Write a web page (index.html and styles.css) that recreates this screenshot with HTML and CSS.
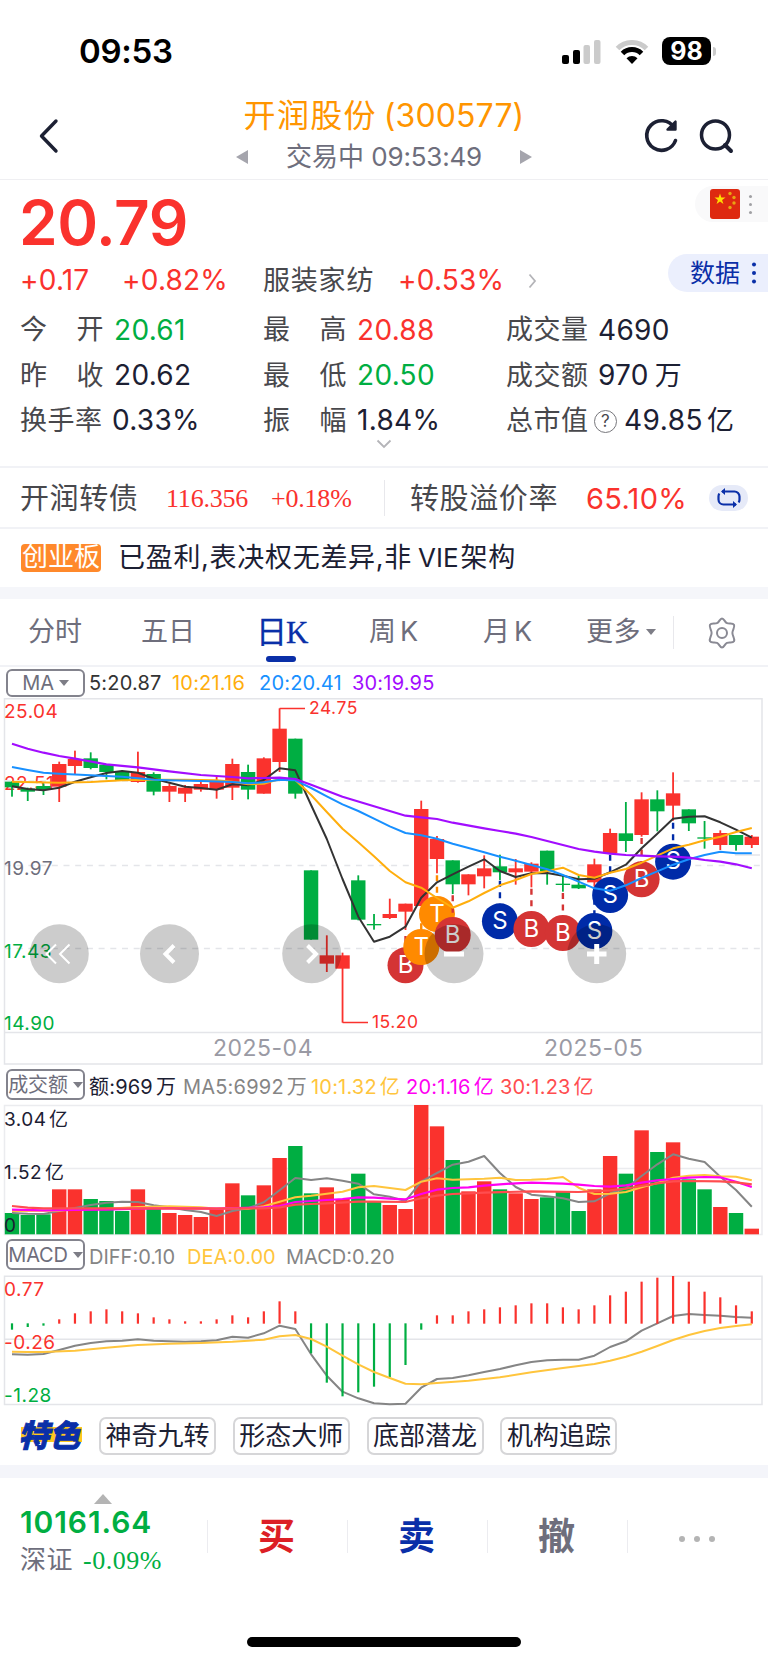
FILE: index.html
```html
<!DOCTYPE html>
<html lang="zh-CN">
<head>
    <meta charset="UTF-8">
    <meta name="viewport" content="width=device-width, initial-scale=1.0">
    <title>开润股份(300577)</title>
    <link rel="stylesheet" href="styles.css">
</head>
<body>
    <div class="statusbar">
        <span class="time">09:53</span>
        <svg class="signal" width="40" height="26" viewBox="0 0 40 26">
            <rect x="0" y="15" width="7" height="9" rx="2"/>
            <rect x="11" y="10" width="7" height="14" rx="2"/>
            <rect x="21.500" y="5" width="6.500" height="19" rx="2" fill="#cbcbcb"/>
            <rect x="32" y="0" width="6.500" height="24" rx="2" fill="#cbcbcb"/>
        </svg>
        <svg class="wifi" width="34" height="26" viewBox="0 0 34 26">
            <path d="M2.500 8.500a20.500 20.500 0 0 1 29 0" fill="none" stroke="#cbcbcb" stroke-width="5"/>
            <path d="M7.500 13.500a13.500 13.500 0 0 1 19 0" fill="none" stroke="#000" stroke-width="5"/>
            <path d="M17 24l-5.500-5.700a8 8 0 0 1 11 0z"/>
        </svg>
        <span class="battery">98</span>
        <i class="battery-cap"></i>
    </div>

    <div class="header">
        <svg class="back" width="22" height="36" viewBox="0 0 22 36"><path d="M18 3L3.500 18L18 33" fill="none" stroke="#1c2033" stroke-width="3.400" stroke-linecap="round" stroke-linejoin="round"/></svg>
        <div class="title">
            <div class="name">开润股份<span>(300577)</span></div>
            <div class="state">
                <svg width="12" height="14" viewBox="0 0 12 14"><path d="M12 0v14L0 7z"/></svg>
                <span>交易中 <b>09:53:49</b></span>
                <svg width="12" height="14" viewBox="0 0 12 14"><path d="M0 0v14l12-7z"/></svg>
            </div>
        </div>
        <svg class="refresh" width="36" height="36" viewBox="0 0 36 36">
            <path d="M31 9.500A14.800 14.800 0 1 0 32.500 22.500" fill="none" stroke="#1c2033" stroke-width="3.600" stroke-linecap="round"/>
            <path d="M32.500 3.500v8h-8z" fill="#1c2033" stroke="#1c2033" stroke-width="2.400" stroke-linejoin="round"/>
        </svg>
        <svg class="search" width="36" height="36" viewBox="0 0 36 36">
            <circle cx="16.500" cy="17" r="14" fill="none" stroke="#1c2033" stroke-width="3.500"/>
            <path d="M26 27l6 6" stroke="#1c2033" stroke-width="4" stroke-linecap="round"/>
        </svg>
    </div>

    <div class="quote">
        <div class="price-row">
            <span class="price">20.79</span>
            <div class="flag">
                <svg width="30" height="30" viewBox="0 0 30 30">
                    <rect width="30" height="30" rx="3" fill="#de2910"/>
                    <path d="M10 4.500l1.300 4h4.200l-3.400 2.500 1.300 4-3.400-2.500-3.400 2.500 1.300-4-3.400-2.500h4.200z" fill="#ffde00"/>
                    <g fill="#e8a413"><circle cx="20" cy="4.500" r="1.700"/><circle cx="24" cy="8.500" r="1.700"/><circle cx="24" cy="14" r="1.700"/><circle cx="20" cy="18.500" r="1.700"/></g>
                </svg>
                <i class="dots gray"></i>
            </div>
        </div>
        <div class="change-row">
            <span class="up">+0.17</span>
            <span class="up">+0.82%</span>
            <span class="label">服装家纺</span>
            <span class="up">+0.53%</span>
            <svg width="9" height="16" viewBox="0 0 9 16"><path d="M1.500 1.500L7 8l-5.500 6.500" fill="none" stroke="#b4b4b8" stroke-width="1.800"/></svg>
            <div class="data-btn">数据<i class="dots"></i></div>
        </div>
        <div class="grid">
            <div><span class="label just"><i>今</i><i>开</i></span><span class="down">20.61</span></div>
            <div><span class="label just"><i>最</i><i>高</i></span><span class="up">20.88</span></div>
            <div><span class="label">成交量</span><span>4690</span></div>
            <div><span class="label just"><i>昨</i><i>收</i></span><span>20.62</span></div>
            <div><span class="label just"><i>最</i><i>低</i></span><span class="down">20.50</span></div>
            <div><span class="label">成交额</span><span>970<em>万</em></span></div>
            <div><span class="label">换手率</span><span class="pull">0.33%</span></div>
            <div><span class="label just"><i>振</i><i>幅</i></span><span>1.84%</span></div>
            <div><span class="label">总市值</span><span class="help">?</span><span class="cap">49.85<em>亿</em></span></div>
        </div>
        <svg class="expand" width="16" height="10" viewBox="0 0 16 10"><path d="M1.500 1.500L8 8l6.500-6.500" fill="none" stroke="#b4b4b8" stroke-width="1.800"/></svg>
    </div>

    <div class="bond">
        <span class="bond-name">开润转债</span>
        <span class="serif">116.356</span>
        <span class="serif">+0.18%</span>
        <div class="premium">
            <span class="bond-name">转股溢价率</span>
            <span class="rate">65.10%</span>
            <span class="swap">
                <svg width="26" height="20" viewBox="0 0 26 20" fill="none" stroke="#0a2fa8" stroke-width="2.200">
                    <path d="M6 3.500h12.500a5 5 0 0 1 5 5v3a6 6 0 0 1-.8 3"/>
                    <path d="M20 16.500H7.500a5 5 0 0 1-5-5v-3a6 6 0 0 1 .8-3"/>
                    <path d="M9 0L5 3.500 9 7zM17 13l4 3.500-4 3.500z" fill="#0a2fa8" stroke="none"/>
                </svg>
            </span>
        </div>
    </div>

    <div class="notice">
        <span class="tag">创业板</span>
        <span class="notice-text">已盈利,表决权无差异,非<b>VIE</b>架构</span>
    </div>

    <div class="tabs">
        <span>分时</span>
        <span>五日</span>
        <span class="active">日K</span>
        <span>周<b>K</b></span>
        <span>月<b>K</b></span>
        <span class="more">更多<i class="caret"></i></span>
        <svg width="32" height="32" viewBox="0 0 32 32" fill="none" stroke="#8a8a94" stroke-width="2">
            <path d="M16 1.500c2.200 0 2.600 3.600 5 4.700 2.200 1 5.800-.6 7 1.600 1.300 2.300-1.600 5.100-1.600 8.200s2.900 5.900 1.600 8.200c-1.200 2.200-4.800.6-7 1.600-2.400 1.100-2.800 4.700-5 4.700s-2.600-3.600-5-4.700c-2.200-1-5.800.6-7-1.600C2.700 21.900 5.600 19.100 5.600 16S2.700 10.100 4 7.800c1.200-2.200 4.800-.6 7-1.600 2.400-1.100 2.800-4.700 5-4.700z"/>
            <circle cx="16" cy="16" r="5"/>
        </svg>
    </div>

    <div class="legend ma">
        <span class="select">MA<i class="caret"></i></span>
        <span class="c-dark">5:20.87</span>
        <span class="c-orange">10:21.16</span>
        <span class="c-blue">20:20.41</span>
        <span class="c-purple">30:19.95</span>
    </div>
    <svg id="kline" class="chart" width="768" height="369"></svg>

    <div class="legend vol">
        <span class="select">成交额<i class="caret"></i></span>
        <span class="c-ink">额:969<em>万</em></span>
        <span class="c-gray">MA5:6992<em>万</em></span>
        <span class="c-yellow">10:1.32<em>亿</em></span>
        <span class="c-magenta">20:1.16<em>亿</em></span>
        <span class="c-red">30:1.23<em>亿</em></span>
    </div>
    <svg id="volume" class="chart" width="768" height="132"></svg>

    <div class="legend macd">
        <span class="select">MACD<i class="caret"></i></span>
        <span class="c-gray">DIFF:0.10</span>
        <span class="c-yellow">DEA:0.00</span>
        <span class="c-gray">MACD:0.20</span>
    </div>
    <svg id="macd" class="chart" width="768" height="131"></svg>

    <div class="features">
        <span class="logo">特色</span>
        <span class="chip">神奇九转</span>
        <span class="chip">形态大师</span>
        <span class="chip">底部潜龙</span>
        <span class="chip">机构追踪</span>
    </div>

    <div class="footer">
        <div class="index">
            <i class="tri"></i>
            <div class="index-num">10161.64</div>
            <div class="index-name">深证<span>-0.09%</span></div>
        </div>
        <div class="act buy">买</div>
        <div class="act sell">卖</div>
        <div class="act cancel">撤</div>
        <div class="act"><i class="dot"></i><i class="dot"></i><i class="dot"></i></div>
    </div>
    <div class="home"></div>

    <script src="chart.js"></script>
</body>
</html>
```

FILE: styles.css
```css
*{
    margin: 0;
    padding: 0;
    box-sizing: border-box;
}

body{
    width: 768px;
    height: 1663px;
    overflow: hidden;
    background-color: #fff;
    color: #1c2033;
    font-family: Inter, "Noto Sans CJK SC", sans-serif;
    font-size: 28px;
    line-height: 1.2;
}

i, em{
    font-style: normal;
}

span{
    white-space: nowrap;
}

svg{
    display: block;
    flex: none;
}

.up{ color: #fa322d; }
.down{ color: #00ae42; }
.label{ color: #48484c; }

/* 状态栏 */
.statusbar{
    display: flex;
    align-items: center;
    height: 102px;
    padding-left: 79px;
    color: #000;
}

.time{
    width: 483px;
    margin-top: 2px;
    font-size: 33px;
    font-weight: 600;
    letter-spacing: -0.3px;
}

.signal{
    margin-top: 3px;
}

.wifi{
    margin-left: 13px;
    margin-top: 3px;
}

.battery{
    width: 49px;
    height: 28px;
    margin-left: 13px;
    border-radius: 8px;
    background-color: #000;
    color: #fff;
    font-size: 25px;
    font-weight: 700;
    line-height: 28px;
    text-align: center;
}

.battery-cap{
    width: 3px;
    height: 9px;
    margin-left: 2px;
    border-radius: 0 4px 4px 0;
    background-color: #cbcbcb;
}

/* 标题 */
.header{
    display: flex;
    height: 78px;
    padding-left: 38px;
    border-bottom: 1px solid #efeff2;
}

.back{
    margin-top: 16px;
}

.title{
    width: 440px;
    margin-left: 103px;
    text-align: center;
}

.name{
    height: 28px;
    margin-left: 2px;
    color: #ff9500;
    font-size: 32px;
    letter-spacing: 1.3px;
    line-height: 28px;
}

.name span{
    margin-left: 7px;
    letter-spacing: 0.1px;
}

.state{
    display: flex;
    align-items: center;
    justify-content: center;
    height: 28px;
    margin-top: 13px;
    margin-left: 2px;
    color: #6e6e7c;
    font-size: 26px;
    gap: 38px;
}

.state b{
    font-weight: 400;
    letter-spacing: -0.2px;
}

.state svg{
    fill: #a5a5ad;
}

.refresh{
    margin: 16px 0 0 40px;
}

.search{
    margin: 16px 0 0 20px;
}

/* 行情 */
.quote{
    height: 288px;
    border-bottom: 2px solid #f1f2f6;
}

.price-row{
    display: flex;
    justify-content: space-between;
    height: 75px;
    padding-left: 19px;
}

.price{
    margin-top: 5px;
    color: #fa322d;
    font-size: 62px;
    font-weight: 600;
    letter-spacing: -0.4px;
    line-height: 76px;
}

.flag{
    display: flex;
    align-items: center;
    width: 73px;
    height: 36px;
    margin-top: 6px;
    padding-left: 15px;
    border-radius: 18px 0 0 18px;
    background-color: #f9f9fa;
}

.dots{
    width: 4px;
    height: 4px;
    margin-left: 12px;
    border-radius: 50%;
    background-color: #0a2fa8;
    box-shadow: 0 -8.5px #0a2fa8, 0 8.5px #0a2fa8;
}

.dots.gray{
    width: 3px;
    height: 3px;
    margin-left: 9px;
    background-color: #a0a0a4;
    box-shadow: 0 -8px #a0a0a4, 0 8px #a0a0a4;
}

.change-row{
    display: grid;
    grid-template-columns: 102px 141px 135px 130px 140px 1fr;
    align-items: center;
    height: 52px;
    padding-left: 20px;
}

.change-row .up{
    letter-spacing: 0.2px;
}

.change-row .label{
    font-size: 27px;
    letter-spacing: 0.8px;
}

.data-btn{
    display: flex;
    align-items: center;
    height: 38px;
    margin-top: -16px;
    padding-left: 22px;
    border-radius: 19px 0 0 19px;
    background-color: #ebeffd;
    color: #0a2fa8;
    font-size: 25px;
}

.grid{
    display: grid;
    grid-template-columns: 243px 242px 1fr;
    grid-auto-rows: 45.3px;
    margin-top: 1px;
    padding-left: 20px;
}

.grid > div{
    display: flex;
    align-items: center;
    letter-spacing: 0.3px;
}

.grid .label{
    width: 84px;
    margin-right: 10px;
    font-size: 27px;
    letter-spacing: 0.5px;
}

.grid > div:nth-child(3n) .label{
    margin-right: 8px;
    margin-left: 1px;
}

.grid .pull{
    margin-left: -2px;
}

.grid em{
    margin-left: 6px;
    font-size: 27px;
}

.just{
    display: flex;
    justify-content: space-between;
}

.grid .help{
    width: 23px;
    height: 23px;
    margin-left: -4px;
    border: 1.5px solid #77777c;
    border-radius: 50%;
    color: #48484c;
    font-size: 17px;
    line-height: 20px;
    text-align: center;
}

.cap{
    margin-left: 7px;
    letter-spacing: 0.5px;
}

.grid .cap em{
    margin-left: 4px;
}

.expand{
    margin: -5px auto 0;
}

/* 转债 */
.bond{
    display: flex;
    align-items: center;
    height: 61px;
    padding-top: 1px;
    padding-left: 20px;
    border-bottom: 2px solid #f1f2f6;
    color: #fa322d;
}

.bond-name{
    width: 146px;
    margin-top: 2px;
    color: #48484c;
    font-size: 29px;
    letter-spacing: 0.6px;
}

.serif{
    width: 105px;
    margin-top: 2px;
    font-family: "Liberation Serif", serif;
    font-size: 26px;
    letter-spacing: -0.2px;
}

.premium{
    display: flex;
    align-items: center;
    height: 36px;
    margin-left: 8px;
    padding-left: 25px;
    border-left: 1px solid #e8e8ec;
}

.premium .bond-name{
    width: 176px;
}

.rate{
    width: 123px;
    margin-top: 2px;
    font-size: 29px;
    letter-spacing: 0.3px;
}

.swap{
    display: flex;
    align-items: center;
    justify-content: center;
    width: 39px;
    height: 26px;
    border-radius: 13px;
    background-color: #e6eaf8;
}

.notice{
    display: flex;
    align-items: center;
    height: 70px;
    padding-left: 21px;
    border-bottom: 12px solid #f5f6fa;
}

.tag{
    width: 80px;
    height: 28px;
    margin-right: 17px;
    border-radius: 4px;
    background-color: #ff892b;
    color: #fff;
    font-size: 26px;
    line-height: 26px;
    text-align: center;
}

.notice-text{
    font-size: 27px;
    letter-spacing: 0.7px;
}

.notice-text b{
    margin: 0 2px 0 6px;
    font-size: 26px;
    font-weight: 400;
    letter-spacing: 0;
}

/* 周期切换 */
.tabs{
    display: grid;
    grid-template-columns: 113px 115px 113px 114px 103px 88px 1fr;
    align-items: center;
    height: 68px;
    padding-top: 1px;
    padding-left: 28px;
    border-bottom: 2px solid #f1f2f6;
    color: #6e6e7c;
    font-size: 27px;
}

.tabs b{
    margin-left: 4px;
    font-weight: 400;
}

.tabs .active{
    position: relative;
    color: #0a2fa8;
    font-family: "Liberation Serif", "Noto Sans CJK SC", serif;
    font-size: 31px;
    -webkit-text-stroke: 0.3px #0a2fa8;
    letter-spacing: -1px;
}

.active::after{
    content: '';
    position: absolute;
    left: 10px;
    top: 42px;
    width: 30px;
    height: 6px;
    border-radius: 3px;
    background-color: #0a2fa8;
}

.more{
    display: flex;
    align-items: center;
    letter-spacing: 0.5px;
    border-right: 1px solid #e8e8ec;
}

.tabs svg{
    margin-left: 32px;
}

.caret{
    display: inline-block;
    margin-left: 5px;
    border: 5px solid transparent;
    border-top: 6px solid #7d7d86;
    border-bottom: 0;
}

/* 指标说明行 */
.legend{
    display: grid;
    align-items: center;
    padding-left: 6px;
    font-size: 20px;
    letter-spacing: 0.2px;
}

.select{
    display: flex;
    align-items: center;
    justify-content: center;
    width: 79px;
    height: 31px;
    border: 2px solid #83838d;
    border-radius: 6px;
    color: #6e6e7c;
    font-size: 20px;
    letter-spacing: -0.2px;
}

.ma{
    grid-template-columns: 83px 83px 87px 93px 1fr;
    height: 31px;
}

.ma .select{
    height: 28px;
}

.vol{
    grid-template-columns: 83px 94px 128px 95px 94px 1fr;
    height: 37px;
    padding-top: 3px;
}

.vol .select,
.macd .select{
    margin-top: -5px;
}

.macd{
    grid-template-columns: 83px 98px 99px 1fr;
    height: 39px;
    padding-top: 3px;
    letter-spacing: 0;
}

.legend em{
    margin-left: 3px;
}

.c-dark{ color: #333; }
.c-ink{ color: #1c2033; }
.c-gray{ color: #858585; }
.c-orange{ color: #ffae0d; }
.c-yellow{ color: #ffc53d; }
.c-blue{ color: #1890ff; }
.c-purple{ color: #a20dff; }
.c-magenta{ color: #ff00f2; }
.c-red{ color: #ff4d4f; }

/* 图表 */
.chart text{
    font-size: 19px;
    letter-spacing: 0.5px;
}

.chart .peak{
    font-size: 17.5px;
}

.chart .month{
    font-size: 23px;
    fill: #9a9aa4;
}

.chart .mark{
    font-size: 24px;
    letter-spacing: 0;
    fill: #fff;
    text-anchor: middle;
}

/* 特色 */
.features{
    display: flex;
    align-items: center;
    height: 72px;
    padding-left: 19px;
    border-bottom: 13px solid #f4f5fa;
}

.logo{
    width: 63px;
    height: 30px;
    margin-right: 17px;
    background: linear-gradient(#ffc81e, #ffc81e) 2px 6px / 61px 15px no-repeat;
    color: #0a2fa8;
    font-size: 31px;
    font-weight: 900;
    font-style: italic;
    -webkit-text-stroke: 0.8px #0a2fa8;
    line-height: 29px;
    text-indent: -1px;
}

.chip{
    width: 117px;
    height: 38px;
    margin-right: 16.8px;
    border: 2px solid #d6d6d8;
    border-radius: 7px;
    font-size: 26px;
    line-height: 33px;
    text-align: center;
}

/* 底部 */
.footer{
    display: flex;
    height: 159px;
    padding-top: 16px;
}

.index{
    width: 207px;
    padding-left: 20px;
}

.tri{
    display: block;
    width: 18px;
    margin-left: 74px;
    border: 9px solid transparent;
    border-bottom: 10px solid #b4b4b4;
    border-top: 0;
}

.index-num{
    height: 37px;
    color: #00ae42;
    font-size: 30px;
    font-weight: 600;
    letter-spacing: 0.9px;
    line-height: 37px;
}

.index-name{
    height: 38px;
    color: #6e6e7c;
    font-size: 26px;
    letter-spacing: 0.5px;
    line-height: 38px;
}

.index-name span{
    margin-left: 10px;
    color: #00ae42;
    font-family: "Liberation Serif", serif;
}

.act{
    display: flex;
    align-items: center;
    justify-content: center;
    width: 140px;
    height: 33px;
    margin-top: 26px;
    padding-right: 2px;
    border-left: 1px solid #ececf0;
    gap: 9px;
    font-size: 37px;
    font-weight: 700;
    line-height: 37px;
}

.buy{ color: #dc1f26; }
.sell{ color: #0a2fa8; }
.cancel{ color: #6e6e7c; }

.dot{
    width: 6px;
    height: 6px;
    margin-top: 4px;
    border-radius: 50%;
    background-color: #b4b4b4;
}

.home{
    width: 274px;
    height: 10px;
    margin: 0 auto;
    border-radius: 5px;
    background-color: #000;
}
```

FILE: chart.js
```js
var RED = '#fa322d', GREEN = '#00ae42', GRID = '#e4e5e9';
var STEP = 15.74;

function cx(i){
    return 12 + i * STEP;
}
function el(svg, name, attrs, text){
    var node = document.createElementNS('http://www.w3.org/2000/svg', name);
    for(var k in attrs) node.setAttribute(k, attrs[k]);
    if(text) node.textContent = text;
    svg.appendChild(node);
    return node;
}
function rect(svg, x, y, w, h, fill){
    el(svg, 'rect', {x: x, y: y, width: w, height: h, fill: fill});
}
function path(svg, d, color, width, more){
    var attrs = {d: d, fill: 'none', stroke: color, 'stroke-width': width};
    for(var k in more) attrs[k] = more[k];
    el(svg, 'path', attrs);
}
function label(svg, x, y, text, fill, cn){
    el(svg, 'text', {x: x, y: y, fill: fill, 'class': cn || ''}, text);
}
// 数据为 [序号, 值, 序号, 值 ...]
function line(svg, data, y, color, width){
    var d = '';
    for(var i = 0; i < data.length; i += 2){
        d += (i ? 'L' : 'M') + cx(data[i]).toFixed(1) + ' ' + y(data[i + 1]).toFixed(1);
    }
    path(svg, d, color, width || 2, {'stroke-linejoin': 'round'});
}
function seq(arr){
    var out = [];
    arr.forEach(function(v, i){ out.push(i, v) });
    return out;
}

// K线
(function(){
    var svg = document.getElementById('kline');
    var y = function(v){ return v / 3 - 8 };
    // 涨跌, 实体上, 实体下, 最高, 最低
    var candles = [
        [0,275,292,275,320],[0,296,305,293,333],[0,288,299,280,315],[1,222,290,215,336],
        [1,207,228,182,252],[0,205,234,187,238],[0,224,246,222,268],[0,246,270,240,272],
        [1,246,276,185,278],[0,252,305,247,316],[1,288,305,280,336],[1,293,311,285,336],
        [1,282,299,275,305],[1,275,299,260,326],[1,222,293,206,330],[0,246,299,224,328],
        [1,205,311,202,311],[1,116,216,55,246],[0,146,311,146,326],[0,541,749,541,749],
        [1,796,821,736,846],[1,796,836,788,998],[0,571,689,556,691],[0,702,706,672,719],
        [1,672,684,626,687],[1,641,665,641,720],[1,357,648,332,648],[1,447,507,438,550],
        [0,511,583,511,612],[1,553,583,553,616],[1,535,559,496,595],[0,529,547,494,570],
        [1,535,547,507,584],[1,521,545,517,592],[0,482,544,482,584],[0,581,585,557,605],
        [0,584,595,558,597],[1,523,577,506,590],[1,429,489,416,489],[0,430,453,336,486],
        [1,328,435,307,440],[0,328,364,301,424],[1,310,347,247,392],[0,358,400,358,423],
        [0,442,446,393,476],[1,429,465,421,480],[0,435,465,435,482],[1,440,465,435,474]
    ];

    path(svg, 'M4.500 .7H762V366H4.500zM4.500 334.500H762', GRID, 1.5);
    path(svg, 'M5 83H762M5 167.500H762M5 250.500H762', GRID, 1.5, {'stroke-dasharray': '6 5.700'});
    path(svg, 'M735 157H760', GRID, 1.5);

    label(svg, 4, 20, '25.04', RED);
    label(svg, 4, 92, '22.51', RED);
    label(svg, 4, 177, '19.97', '#6e6e7c');
    label(svg, 4, 259.500, '17.43', GREEN);
    label(svg, 4, 332, '14.90', GREEN);
    label(svg, 213, 358, '2025-04', '', 'month');
    label(svg, 544, 358, '2025-05', '', 'month');

    candles.forEach(function(c, i){
        var color = c[0] ? RED : GREEN;
        rect(svg, cx(i) - 0.9, y(c[3]), 1.8, (c[4] - c[3]) / 3, color);
        rect(svg, cx(i) - 7.2, y(c[1]), 14.4, (c[2] - c[1]) / 3, color);
    });

    path(svg, 'M279.600 10.500H305M342.600 324.500H368', RED, 1.6);
    label(svg, 309, 16, '24.75', RED, 'peak');
    label(svg, 372, 330, '15.20', RED, 'peak');

    // 买卖点: 序号, 中心y, 虚线起点, 类型
    var colors = {B: '#d43434', S: '#002ba8', T: '#ff8a00'};
    var marks = [
        [25,826,738,'B'],[26,771,700,'T'],[27,672,556,'T'],[28,735,616,'B'],[31,694,572,'S'],
        [33,717,596,'B'],[35,729,609,'B'],[37,723,592,'S'],[38,615,494,'S'],[40,568,444,'B'],[42,515,398,'S']
    ];
    marks.forEach(function(m){
        var x = cx(m[0]);
        path(svg, 'M' + x + ' ' + y(m[2]) + 'V' + y(m[1]), colors[m[3]], 2.4, {'stroke-dasharray': '6 5.500'});
        el(svg, 'circle', {cx: x, cy: y(m[1]), r: 18, fill: colors[m[3]]});
        label(svg, x, y(m[1]) + 7.5, m[3], '', 'mark');
    });

    line(svg, seq([289,297,301,293,275,262,249,243,248,266,278,290,294,299,283,286,270,235,241,345,447,567,680,755,
        740,710,623,577,553,530,508,543,561,550,549,557,568,566,547,524,475,431,386,380,379,397,419,443]), y, '#333');
    line(svg, [0,275,3,278,5,276,7,271,9,269,11,269,13,271,14,275,15,283,16,281,17,267,18,270,19,315,20,366,21,416,
        22,457,23,499,24,543,25,577,26,593,27,624,28,653,29,634,30,609,31,586,32,570,33,552,34,543,35,533,36,555,
        37,563,38,548,39,537,40,518,41,497,42,475,43,464,44,451,45,440,46,426,47,414], y, '#ffae0d');
    line(svg, [0,231,1,240,2,248,3,251,5,256,7,260,9,269,10,271,12,273,14,276,15,280,16,277,17,269,18,271,19,294,
        20,319,21,343,22,363,23,386,24,409,25,429,26,436,27,446,28,461,29,474,30,487,31,500,32,512,33,525,34,538,
        35,555,36,575,37,595,38,602,39,586,40,564,41,544,42,524,43,508,44,495,45,485,46,490,47,490], y, '#1890ff');
    line(svg, [0,161,1,176,2,188,3,198,4,206,6,223,8,232,10,244,12,255,14,261,15,265,16,264,17,263,18,267,19,284,
        20,302,21,320,23,349,25,377,26,382,27,387,28,398,30,415,31,423,32,431,33,441,34,453,35,465,36,477,37,485,
        38,491,39,495,40,497,41,499,42,500,43,503,44,510,45,515,46,523,47,535], y, '#a20dff', 2.2);

    // 浮动按钮
    [59.3, 169.5, 311.7, 454, 596.7].forEach(function(x){
        el(svg, 'circle', {cx: x, cy: 255.7, r: 29.5, fill: '#000', 'fill-opacity': 0.2});
    });
    path(svg, 'M56 246.500L46.500 256L56 265.500M69.500 246.500L60 256L69.500 265.500', '#fff', 2);
    path(svg, 'M174 247.500L165.500 256L174 264.500M307.500 247.500L316 256L307.500 264.500', '#fff', 4);
    path(svg, 'M444 256H464M587 256H606.500M596.700 246V266', '#fff', 5);
})();

// 成交额
(function(){
    var svg = document.getElementById('volume');
    var y = function(v){ return v / 3 - 39 };
    // 下跌日的序号
    var downs = [0,1,2,5,6,7,9,15,18,19,22,23,28,31,34,35,36,39,41,43,44,46];
    var tops = [444,450,448,373,373,402,408,438,373,432,444,450,456,432,355,391,361,279,243,385,367,402,326,410,
        420,432,120,184,285,379,349,373,385,402,397,381,438,373,273,326,196,261,232,343,373,426,444,491];

    path(svg, 'M4.500 1.500H762V130.500H4.500zM4.500 64.500H762', '#ebecef', 1.5);
    tops.forEach(function(v, i){
        rect(svg, cx(i) - 7.2, y(v), 14.4, 130.3 - y(v), downs.indexOf(i) > -1 ? GREEN : RED);
    });
    line(svg, seq([444,446,447,438,429,420,413,410,411,421,427,435,441,453,438,430,412,376,339,345,340,347,356,388,
        395,408,350,324,299,290,273,324,366,389,394,400,411,409,385,370,333,298,268,281,291,335,375,425]), y, '#858585');
    line(svg, [0,438,3,437,4,433,6,431,8,426,10,424,12,427,13,431,14,429,15,431,16,424,17,410,18,397,19,392,20,386,
        21,380,22,367,23,363,24,369,25,375,26,350,27,340,28,344,29,343,30,341,31,338,32,345,33,344,34,342,35,336,
        36,368,37,387,38,386,39,381,40,367,41,354,42,338,43,332,44,330,45,334,46,335,47,346], y, '#ffc53d');
    line(svg, [0,434,2,436,4,435,6,434,8,431,10,430,13,431,16,427,17,423,18,411,19,408,20,405,21,402,22,397,23,398,
        24,401,25,403,26,387,27,374,28,369,29,367,30,362,31,358,32,355,33,353,35,356,36,359,37,363,38,365,39,361,
        40,353,41,346,42,342,43,338,44,336,45,337,46,350,47,366], y, '#ff00f2', 2.2);
    line(svg, [0,423,1,428,2,430,4,430,8,430,12,431,16,430,17,427,18,419,19,417,20,415,22,410,23,410,25,411,26,400,
        27,392,28,387,29,385,30,383,33,379,36,381,38,376,39,371,40,363,41,355,42,349,43,348,45,349,46,352,47,358], y, '#ff4d4f', 2.2);
    label(svg, 4, 21.5, '3.04', '#1c2033');
    label(svg, 49, 21.5, '亿', '#1c2033');
    label(svg, 4, 75, '1.52', '#1c2033');
    label(svg, 45, 75, '亿', '#1c2033');
    label(svg, 4, 127.5, '0', '#1c2033');
})();

// MACD
(function(){
    var svg = document.getElementById('macd');
    var y = function(v){ return v / 3 - 40 };
    var bars = [284,276,272,253,235,229,223,229,235,247,253,259,259,253,241,247,229,199,229,355,443,484,472,455,
        426,390,284,241,241,229,223,217,211,205,205,217,223,211,181,170,140,128,123,140,170,187,211,229];

    path(svg, 'M4.500 1.300H762V129.500H4.500zM4.500 64.300H762', GRID, 1.5);
    label(svg, 4, 20.5, '0.77', RED);
    label(svg, 4, 74, '-0.26', RED);
    label(svg, 4, 127, '-1.28', GREEN);
    line(svg, seq([358,359,357,345,332,324,319,317,313,317,319,320,319,316,305,308,295,272,282,358,422,470,490,505,
        508,506,458,432,429,421,411,402,391,381,376,374,374,362,336,319,287,265,243,237,240,242,246,248]), y, '#858585');
    bars.forEach(function(v, i){
        var top = Math.min(v, 265), bottom = Math.max(v, 266);
        rect(svg, cx(i) - 1.1, y(top), 2.2, (bottom - top) / 3, v > 265 ? GREEN : RED);
    });
    line(svg, [0,350,1,351,2,351,4,347,6,338,8,330,10,326,12,324,14,320,16,314,17,304,18,300,19,312,20,335,21,362,
        22,388,23,411,24,429,25,446,26,448,27,444,29,437,31,427,33,412,35,399,37,387,38,377,39,365,40,350,41,333,
        42,315,43,300,44,288,45,279,46,273,47,268], y, '#ffc53d');
})();
```
